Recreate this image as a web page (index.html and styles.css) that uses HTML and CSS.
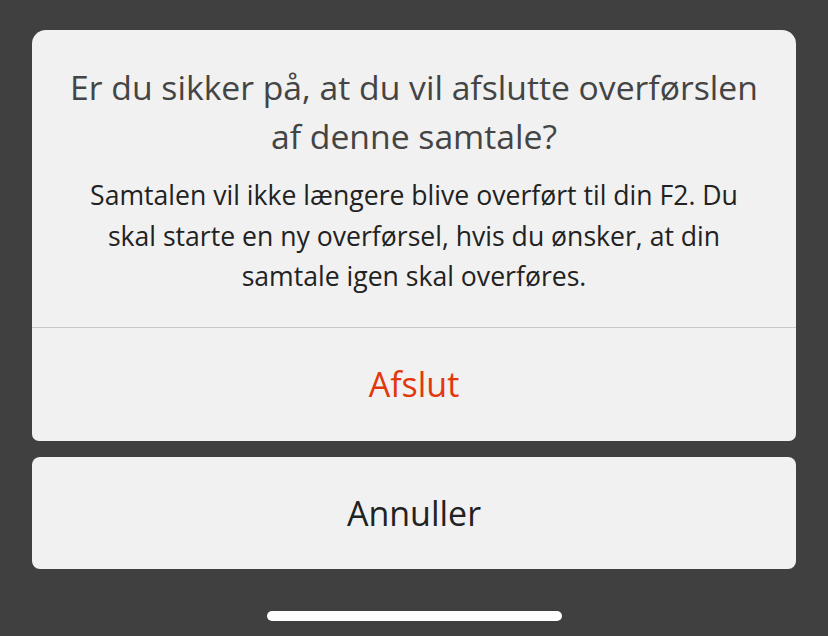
FILE: index.html
```html
<!DOCTYPE html>
<html lang="da">
<head>
<meta charset="utf-8">
<link rel="stylesheet" href="styles.css">
</head>
<body>
<div class="sheet">
  <div class="card card-main">
    <div class="header">
      <h1 class="title">Er du sikker på, at du vil afslutte overførslen af denne samtale?</h1>
      <p class="message">Samtalen vil ikke længere blive overført til din F2. Du skal starte en ny overførsel, hvis du ønsker, at din samtale igen skal overføres.</p>
    </div>
    <div class="action action-destructive">Afslut</div>
  </div>
  <div class="card card-cancel">
    <div class="action action-cancel">Annuller</div>
  </div>
  <div class="home-row"><div class="home-indicator"></div></div>
</div>
</body>
</html>
```
FILE: styles.css
```css
html, body {
  margin: 0;
  padding: 0;
  background: #404040;
  width: 828px;
  height: 636px;
  overflow: hidden;
}
body {
  font-family: "Open Sans", "Liberation Sans", sans-serif;
}
.sheet {
  padding: 30px 32px 0 32px;
  display: flex;
  flex-direction: column;
}
.card {
  background: #f1f1f1;
  overflow: hidden;
}
.card-main {
  border-radius: 14px 14px 7px 7px;
}
.card-cancel {
  margin-top: 16px;
  border-radius: 8px;
}
.header {
  padding: 33px 28px 30px;
  text-align: center;
  border-bottom: 1px solid #c8c8c8;
}
.title {
  margin: 0;
  font-size: 33.7px;
  font-weight: 400;
  line-height: 49px;
  color: #444444;
}
.message {
  margin: 14px 6px 0;
  font-size: 26.6px;
  line-height: 40.5px;
  color: #222222;
}
.action {
  display: flex;
  align-items: center;
  justify-content: center;
  font-size: 34px;
}
.action-destructive {
  height: 113px;
  color: #e2380c;
}
.action-cancel {
  height: 112px;
  color: #222222;
}
.home-row {
  display: flex;
  justify-content: center;
  padding-top: 42px;
}
.home-indicator {
  width: 295px;
  height: 10px;
  border-radius: 5px;
  background: #ffffff;
}
```
